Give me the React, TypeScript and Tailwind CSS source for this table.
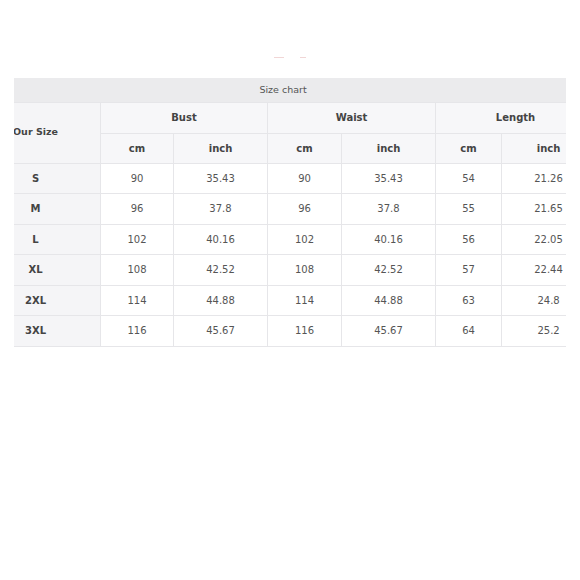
const rows = [
  ['S', '90', '35.43', '90', '35.43', '54', '21.26'],
  ['M', '96', '37.8', '96', '37.8', '55', '21.65'],
  ['L', '102', '40.16', '102', '40.16', '56', '22.05'],
  ['XL', '108', '42.52', '108', '42.52', '57', '22.44'],
  ['2XL', '114', '44.88', '114', '44.88', '63', '24.8'],
  ['3XL', '116', '45.67', '116', '45.67', '64', '25.2'],
];

const widths = ['w-[130px]', 'w-[73px]', 'w-[94px]', 'w-[74px]', 'w-[94px]', 'w-[66px]', 'w-[94px]'];

export default function App() {
  return (
    <div className="h-[580px] w-[580px] bg-white font-['DejaVu_Sans',sans-serif] text-[#555]">
      {/* faint marks above the chart */}
      <div className="flex h-[78px] items-start justify-center gap-[16px] pt-[57px]">
        <span className="h-px w-[10px] bg-[#f1d6d6]" />
        <span className="h-px w-[6px] bg-[#f1d6d6]" />
      </div>

      <div className="mx-[14px] w-[552px] overflow-hidden">
        <table className="ml-[-44px] w-[625px] table-fixed border-collapse text-center text-[10px]">
          <colgroup>
            {widths.map((w, i) => (
              <col key={i} className={w} />
            ))}
          </colgroup>
          <thead>
            <tr className="h-[24px] bg-[#ebebed]">
              <th colSpan={7} className="text-[9.5px] font-normal text-[#555]">
                Size chart
              </th>
            </tr>
            <tr className="h-[31px] bg-[#f7f7f9] font-bold text-[#444]">
              <th rowSpan={2} className="border border-[#e6e6e9] bg-[#f5f5f7] text-[9.5px]">
                Our Size
              </th>
              <th colSpan={2} className="border border-[#e6e6e9]">Bust</th>
              <th colSpan={2} className="border border-[#e6e6e9]">Waist</th>
              <th colSpan={2} className="border border-[#e6e6e9]">Length</th>
            </tr>
            <tr className="h-[30px] bg-[#f7f7f9] font-bold text-[#444]">
              {['cm', 'inch', 'cm', 'inch', 'cm', 'inch'].map((h, i) => (
                <th key={i} className="border border-[#e6e6e9]">
                  {h}
                </th>
              ))}
            </tr>
          </thead>
          <tbody>
            {rows.map((r) => (
              <tr key={r[0]} className="h-[30.5px]">
                <td className="border border-[#e6e6e9] bg-[#f5f5f7] font-bold text-[#444]">{r[0]}</td>
                {r.slice(1).map((v, i) => (
                  <td key={i} className="border border-[#e6e6e9] bg-white">
                    {v}
                  </td>
                ))}
              </tr>
            ))}
          </tbody>
        </table>
      </div>
    </div>
  );
}
